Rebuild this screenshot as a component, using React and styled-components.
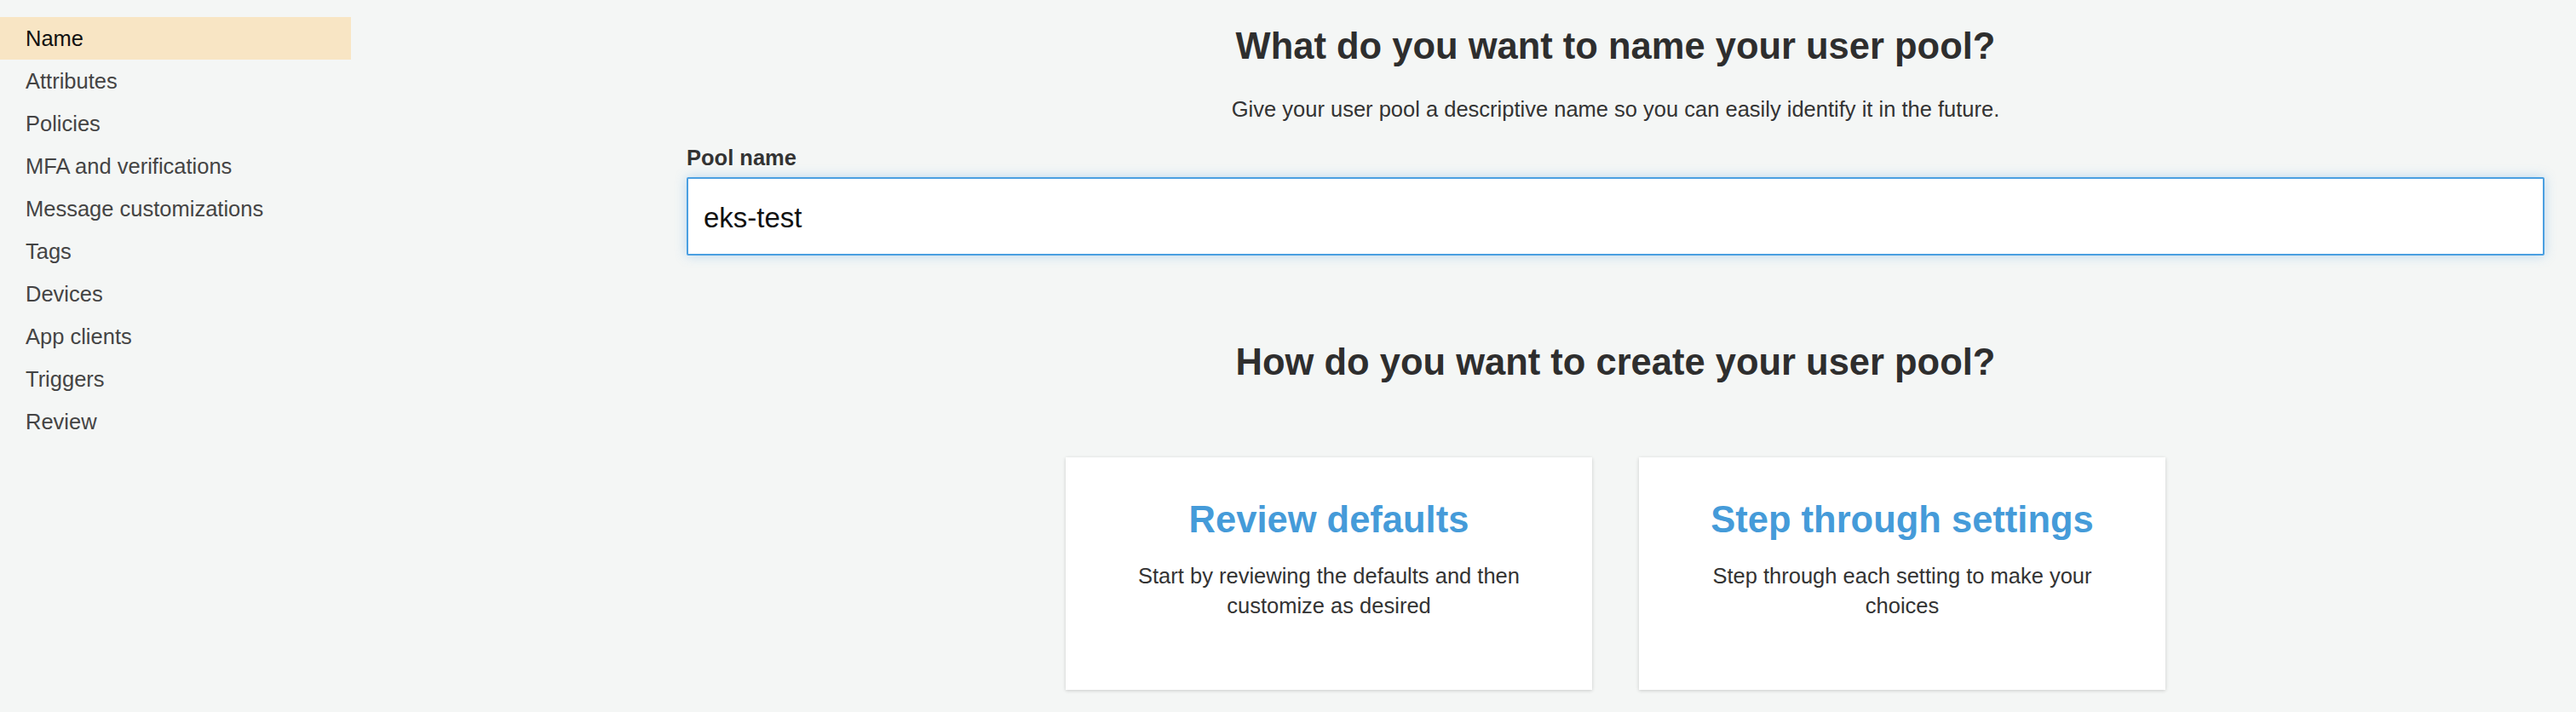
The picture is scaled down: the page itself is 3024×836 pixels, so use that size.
import React from "react";
import styled, { createGlobalStyle } from "styled-components";

const GlobalStyle = createGlobalStyle`
  body {
    margin: 0;
    background: #f4f6f5;
    font-family: "Liberation Sans", Arial, sans-serif;
    color: #333;
  }
`;

const Layout = styled.div`
  display: flex;
  min-height: 836px;
`;

const Sidebar = styled.nav`
  width: 412px;
  flex-shrink: 0;
  padding-top: 20px;
`;

const NavItem = styled.div`
  height: 50px;
  display: flex;
  align-items: center;
  padding-left: 30px;
  font-size: 25.5px;
  color: ${(p) => (p.active ? "#111" : "#444")};
  background: ${(p) => (p.active ? "#f8e5c4" : "transparent")};
`;

const Main = styled.main`
  flex: 1;
  padding: 29px 37px 0 394px;
  display: flex;
  flex-direction: column;
`;

const Heading = styled.h1`
  margin: 0;
  font-size: 43.5px;
  line-height: 50px;
  font-weight: bold;
  text-align: center;
  color: #2e2e2e;
`;

const Subtitle = styled.p`
  margin: 34px 0 0;
  font-size: 25.5px;
  line-height: 30px;
  text-align: center;
  color: #333;
`;

const Label = styled.label`
  margin-top: 27px;
  font-size: 25.5px;
  line-height: 30px;
  font-weight: bold;
  color: #333;
`;

const Input = styled.input`
  margin-top: 8px;
  height: 92px;
  box-sizing: border-box;
  border: 2px solid #4a9fe1;
  border-radius: 2px;
  padding: 3px 18px 0;
  font-family: "Liberation Sans", Arial, sans-serif;
  font-size: 33px;
  color: #111;
  background: #fff;
  box-shadow: 0 0 14px rgba(74, 159, 225, 0.35);
  outline: none;
`;

const SecondHeading = styled(Heading)`
  margin-top: 100px;
`;

const Cards = styled.div`
  margin-top: 87px;
  display: flex;
  justify-content: center;
  gap: 55px;
`;

const Card = styled.div`
  width: 618px;
  height: 273px;
  box-sizing: border-box;
  padding: 48px 56px 0;
  background: #fff;
  box-shadow: 0 1px 4px rgba(0, 0, 0, 0.18);
  text-align: center;
`;

const CardTitle = styled.h2`
  margin: 0;
  font-size: 43.5px;
  line-height: 50px;
  font-weight: bold;
  color: #459bd9;
`;

const CardText = styled.p`
  margin: 24px 0 0;
  font-size: 25.5px;
  line-height: 35px;
  color: #333;
`;

const steps = [
  "Name",
  "Attributes",
  "Policies",
  "MFA and verifications",
  "Message customizations",
  "Tags",
  "Devices",
  "App clients",
  "Triggers",
  "Review",
];

export default function App() {
  return (
    <>
      <GlobalStyle />
      <Layout>
        <Sidebar>
          {steps.map((s, i) => (
            <NavItem key={s} active={i === 0}>
              {s}
            </NavItem>
          ))}
        </Sidebar>
        <Main>
          <Heading>What do you want to name your user pool?</Heading>
          <Subtitle>
            Give your user pool a descriptive name so you can easily identify it in the future.
          </Subtitle>
          <Label htmlFor="pool-name">Pool name</Label>
          <Input id="pool-name" defaultValue="eks-test" />
          <SecondHeading>How do you want to create your user pool?</SecondHeading>
          <Cards>
            <Card>
              <CardTitle>Review defaults</CardTitle>
              <CardText>Start by reviewing the defaults and then customize as desired</CardText>
            </Card>
            <Card>
              <CardTitle>Step through settings</CardTitle>
              <CardText>Step through each setting to make your choices</CardText>
            </Card>
          </Cards>
        </Main>
      </Layout>
    </>
  );
}
